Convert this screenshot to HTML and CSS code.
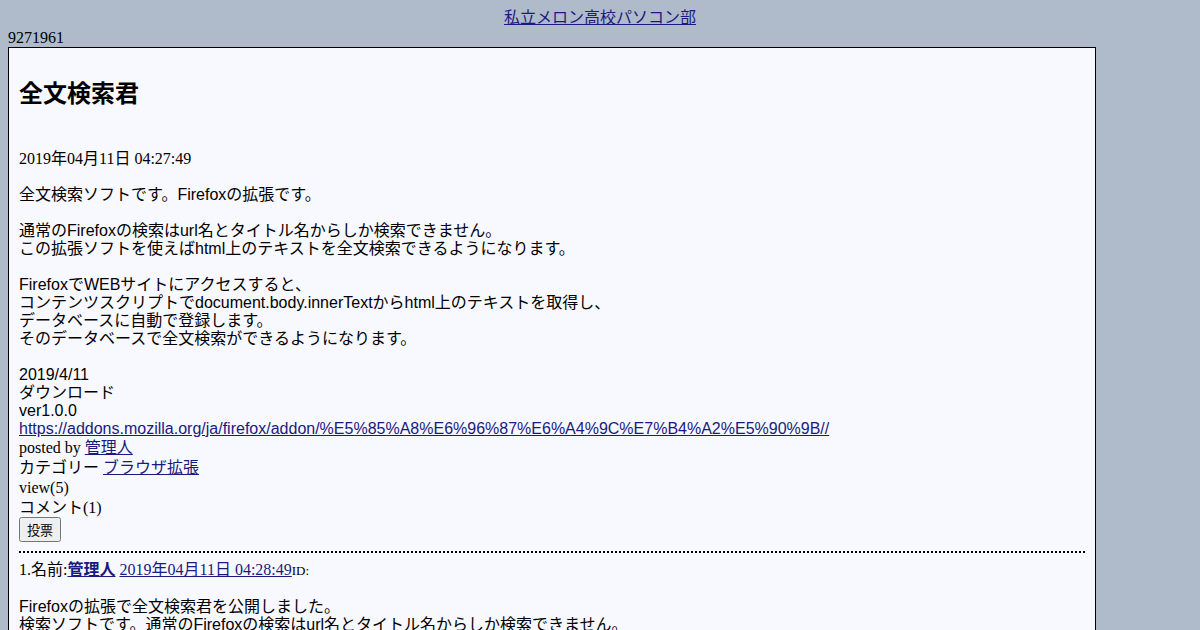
FILE: index.html
```html
<!DOCTYPE html>
<html lang="ja">
<head>
    <meta charset="UTF-8">
    <title>全文検索君 - 私立メロン高校パソコン部</title>
    <link rel="stylesheet" href="styles.css">
</head>
<body>
    <div class="site-title"><a href="#">私立メロン高校パソコン部</a></div>
    <div class="counter">9271961</div>

    <div class="article">
        <h1>全文検索君</h1>
        <div class="date">2019年04月11日 04:27:49</div>

        <div class="body-text">
            全文検索ソフトです。Firefoxの拡張です。<br>
            <br>
            通常のFirefoxの検索はurl名とタイトル名からしか検索できません。<br>
            この拡張ソフトを使えばhtml上のテキストを全文検索できるようになります。<br>
            <br>
            FirefoxでWEBサイトにアクセスすると、<br>
            コンテンツスクリプトでdocument.body.innerTextからhtml上のテキストを取得し、<br>
            データベースに自動で登録します。<br>
            そのデータベースで全文検索ができるようになります。<br>
            <br>
            2019/4/11<br>
            ダウンロード<br>
            ver1.0.0<br>
            <a href="#">https://addons.mozilla.org/ja/firefox/addon/%E5%85%A8%E6%96%87%E6%A4%9C%E7%B4%A2%E5%90%9B//</a>
        </div>

        <div class="meta">posted by <a href="#">管理人</a></div>
        <div class="meta">カテゴリー <a href="#">ブラウザ拡張</a></div>
        <div class="meta">view(5)</div>
        <div class="meta">コメント(1)</div>
        <div class="vote-row"><button class="vote">投票</button></div>

        <div class="comment">
            <div class="comment-head">1.名前:<a href="#" class="author">管理人</a> <a href="#">2019年04月11日 04:28:49</a><span class="comment-id">ID:</span></div>
            <div class="body-text comment-text">
                Firefoxの拡張で全文検索君を公開しました。<br>
                検索ソフトです。通常のFirefoxの検索はurl名とタイトル名からしか検索できません。
            </div>
        </div>
    </div>
</body>
</html>
```

FILE: styles.css
```css
body {
    margin: 8px;
    background-color: #afbaca;
    color: #000;
    font-family: "Liberation Serif", "Noto Sans CJK JP", serif;
    font-size: 16px;
}

a {
    color: #1a1a80;
}

.site-title {
    text-align: center;
    line-height: 20px;
}

.counter {
    line-height: 19px;
}

.article {
    width: 1066px;
    padding: 10px;
    border: 1px solid #000;
    background-color: #f8f8ff;
}

h1 {
    font-family: "Liberation Sans", "Noto Sans CJK JP", sans-serif;
    font-size: 24px;
    font-weight: bold;
    line-height: 28px;
    margin: 22px 0 0 0;
}

.date {
    line-height: 20px;
    margin-top: 41px;
}

.body-text {
    font-family: "Liberation Sans", "Noto Sans CJK JP", sans-serif;
    line-height: 18px;
    margin-top: 17px;
}

.meta {
    line-height: 20px;
}

.meta + .meta + .meta + .meta {
    line-height: 19px;
}

.vote-row {
    line-height: 0;
}

.vote {
    font-family: "Liberation Sans", "Noto Sans CJK JP", sans-serif;
    font-size: 13px;
    padding: 1px 6px;
    margin: 0;
}

.comment {
    border-top: 2px dotted #000;
    margin-top: 9px;
    padding-top: 7px;
}

.comment-head {
    line-height: 20px;
}

.author {
    font-weight: bold;
}

.comment-id {
    font-size: 13px;
}
```
